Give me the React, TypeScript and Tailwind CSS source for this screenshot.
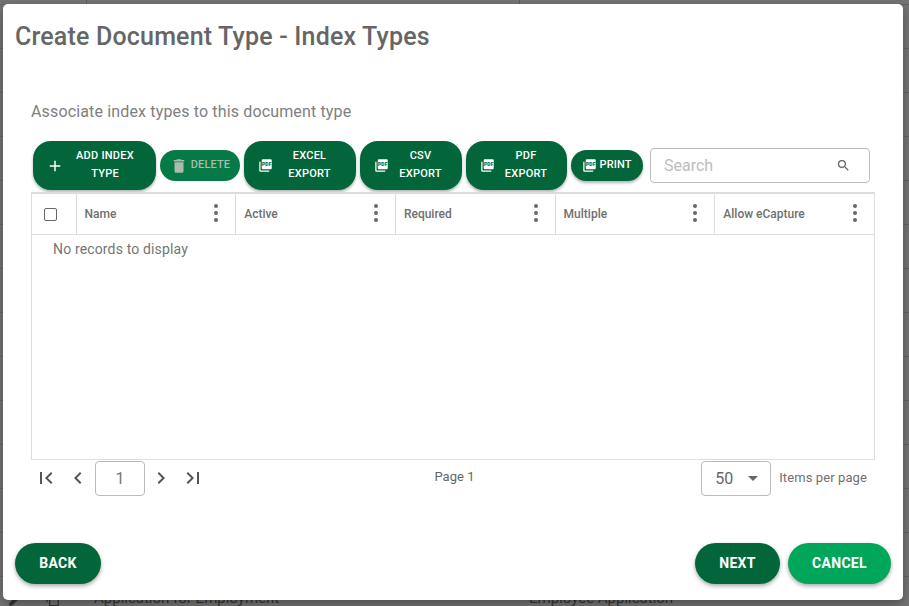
import React from 'react';
import { MdAdd, MdChevronLeft, MdChevronRight, MdDelete, MdEdit, MdOutlineFileCopy, MdFirstPage, MdLastPage, MdSearch } from 'react-icons/md';

const PdfIcon = () => (
  <svg viewBox="0 0 24 24" className="w-[15px] h-[15px] -ml-px shrink-0" fill="currentColor">
    <path d="M20 2H8c-1.1 0-2 .9-2 2v12c0 1.1.9 2 2 2h12c1.1 0 2-.9 2-2V4c0-1.1-.9-2-2-2zM4 6H2v14c0 1.1.9 2 2 2h14v-2H4V6z" />
    <text x="14" y="12.8" fontSize="8" fontWeight="900" textAnchor="middle" fill="#03663a" fontFamily="Roboto, sans-serif">PDF</text>
  </svg>
);

const Kebab = () => (
  <span className="flex flex-col gap-[3px] items-center w-1 shrink-0 -mt-[2px]">
    <i className="block w-1 h-1 rounded-full bg-[#666]" />
    <i className="block w-1 h-1 rounded-full bg-[#666]" />
    <i className="block w-1 h-1 rounded-full bg-[#666]" />
  </span>
);

const ToolButton = ({ w, pl, line1, line2, icon }: { w: string; pl: string; line1: string; line2: string; icon: React.ReactNode }) => (
  <button className={`${w} ${pl} h-[49px] rounded-[18px] bg-[#03663a] text-white flex items-center gap-[6px] pr-[16px] text-[11px] font-medium leading-[18px] tracking-[0.25px] shadow-[0_2px_3px_rgba(0,0,0,0.3)]`}>
    {icon}
    <span className="flex-1 text-center -mt-[2px]">{line1}<br />{line2}</span>
  </button>
);

const columns = ['Name', 'Active', 'Required', 'Multiple', 'Allow eCapture'];
const behindRows = Array.from({ length: 15 }, (_, i) => i);

export default function App() {
  return (
    <div className="relative h-[606px] w-[909px] overflow-hidden bg-white" style={{ fontFamily: 'Roboto, sans-serif' }}>
      {/* page behind the dialog */}
      <div className="-mt-[39px]">
        {behindRows.map((i) => (
          <div key={i} className="flex h-[44px] border-b border-[#ddd] items-center text-[15px] text-[#777]">
            <div className={`w-[87px] h-full flex items-center pl-[7px] ${i === 0 ? 'border-r border-[#ccc]' : ''}`}>
              {i === 14 && <><MdEdit size={18} /><MdOutlineFileCopy size={16} className="ml-[20px]" /></>}
            </div>
            <div className={`w-[433px] h-full pl-[7px] flex items-center ${i === 0 ? 'border-r border-[#ccc]' : ''}`}>{i === 14 ? 'Application for Employment' : ''}</div>
            <div className="pl-[9px]">{i === 14 ? 'Employee Application' : ''}</div>
          </div>
        ))}
      </div>
      <div className="absolute inset-0 bg-black/55" />

      <div className="absolute left-[3px] top-1 w-[900px] h-[596px] bg-white rounded-[5px] flex flex-col pl-3 pr-3 shadow-[0_4px_10px_rgba(0,0,0,0.3)] text-[#666]">
        <h1 className="text-[25px] leading-8 font-medium text-[#666] mt-[17px] tracking-[0.18px]">Create Document Type - Index Types</h1>
        <p className="text-[16px] leading-5 text-[#808080] ml-4 mt-[49px] tracking-[0.15px]">Associate index types to this document type</p>

        <div className="flex items-center gap-1 ml-[18px] mt-[19px] h-[49px]">
          <ToolButton w="w-[123px]" pl="pl-[13px]" line1="ADD INDEX" line2="TYPE" icon={<MdAdd size={18} />} />
          <button className="w-[80px] h-[31px] rounded-full bg-[#067a46] text-[#a9bcae] flex items-center justify-center gap-[3px] text-[11px] font-medium tracking-[0.15px]">
            <MdDelete size={18} />
            DELETE
          </button>
          <ToolButton w="w-[112px]" pl="pl-[15px]" line1="EXCEL" line2="EXPORT" icon={<PdfIcon />} />
          <ToolButton w="w-[102px]" pl="pl-[15px]" line1="CSV" line2="EXPORT" icon={<PdfIcon />} />
          <ToolButton w="w-[101px]" pl="pl-[15px]" line1="PDF" line2="EXPORT" icon={<PdfIcon />} />
          <button className="w-[72px] h-[31px] rounded-full bg-[#03663a] text-white flex items-center justify-center gap-[3px] text-[11px] font-medium tracking-[0.1px] shadow-[0_2px_3px_rgba(0,0,0,0.3)]">
            <PdfIcon />
            PRINT
          </button>
          <div className="w-[220px] h-[35px] ml-[3px] border border-[#bbb] rounded-[4px] flex items-center justify-between pl-[13px] pr-[18px]">
            <span className="text-[16px] text-[#bdbdbd]">Search</span>
            <MdSearch size={15} className="text-[#666]" />
          </div>
        </div>

        <div className="ml-4 mt-[2px] w-[844px] h-[268px] border border-[#ddd] border-t-2">
          <div className="flex h-[41px] border-b border-[#ddd]">
            <div className="w-[44.5px] border-r border-[#ddd] flex items-center pl-[12px]">
              <span className="w-[13px] h-[13px] border border-[#666] rounded-[2px]" />
            </div>
            {columns.map((c, i) => (
              <div key={c} className={`flex-1 flex items-center justify-between pl-2 pr-[17px] text-[12px] font-medium text-[#707070] ${i < 4 ? 'border-r border-[#ddd]' : ''}`}>
                <span>{c}</span>
                <Kebab />
              </div>
            ))}
          </div>
          <div className="pl-[21px] pt-[4px] text-[14px] leading-5 tracking-[0.15px] text-[#757575]">No records to display</div>
        </div>

        <div className="flex items-center ml-4 w-[844px] h-[35px] mt-[1px]">
          <div className="flex items-center w-[320px] pl-[3px] text-[#555]">
            <MdFirstPage size={24} className="-mt-[2px]" />
            <MdChevronLeft size={24} className="ml-[8px] -mt-[2px]" />
            <div className="w-[50px] h-[35px] ml-[5px] border border-[#bbb] rounded-[4px] flex items-center justify-center text-[16px] text-[#777]">1</div>
            <MdChevronRight size={24} className="ml-[4px] -mt-[2px]" />
            <MdLastPage size={24} className="ml-[8px] -mt-[2px]" />
          </div>
          <div className="w-[207px] text-center text-[13px] tracking-[0.05px] text-[#666] -mt-[4px]">Page 1</div>
          <div className="flex items-center ml-auto pr-[8px]">
            <div className="w-[70px] h-[35px] border border-[#bbb] rounded-[4px] flex items-center pl-[13px] text-[16px] text-[#666]">
              50
              <span className="ml-[15px] w-0 h-0 border-x-[5px] border-x-transparent border-t-[5px] border-t-[#666]" />
            </div>
            <span className="ml-2 text-[13px] text-[#707070] tracking-[0.1px] -mt-[2px]">Items per page</span>
          </div>
        </div>

        <div className="flex mt-auto mb-4 items-center">
          <button className="w-[86px] h-[41px] rounded-full bg-[#03663a] text-white text-[14px] font-bold tracking-[0.3px] shadow-[0_2px_4px_rgba(0,0,0,0.35)]">BACK</button>
          <button className="w-[85px] h-[41px] ml-auto rounded-full bg-[#03663a] text-white text-[14px] font-bold tracking-[0.3px] shadow-[0_2px_4px_rgba(0,0,0,0.35)]">NEXT</button>
          <button className="w-[103px] h-[41px] ml-2 rounded-full bg-[#00a65a] text-white text-[14px] font-bold tracking-[0.3px] shadow-[0_2px_4px_rgba(0,0,0,0.35)]">CANCEL</button>
        </div>
      </div>
    </div>
  );
}
